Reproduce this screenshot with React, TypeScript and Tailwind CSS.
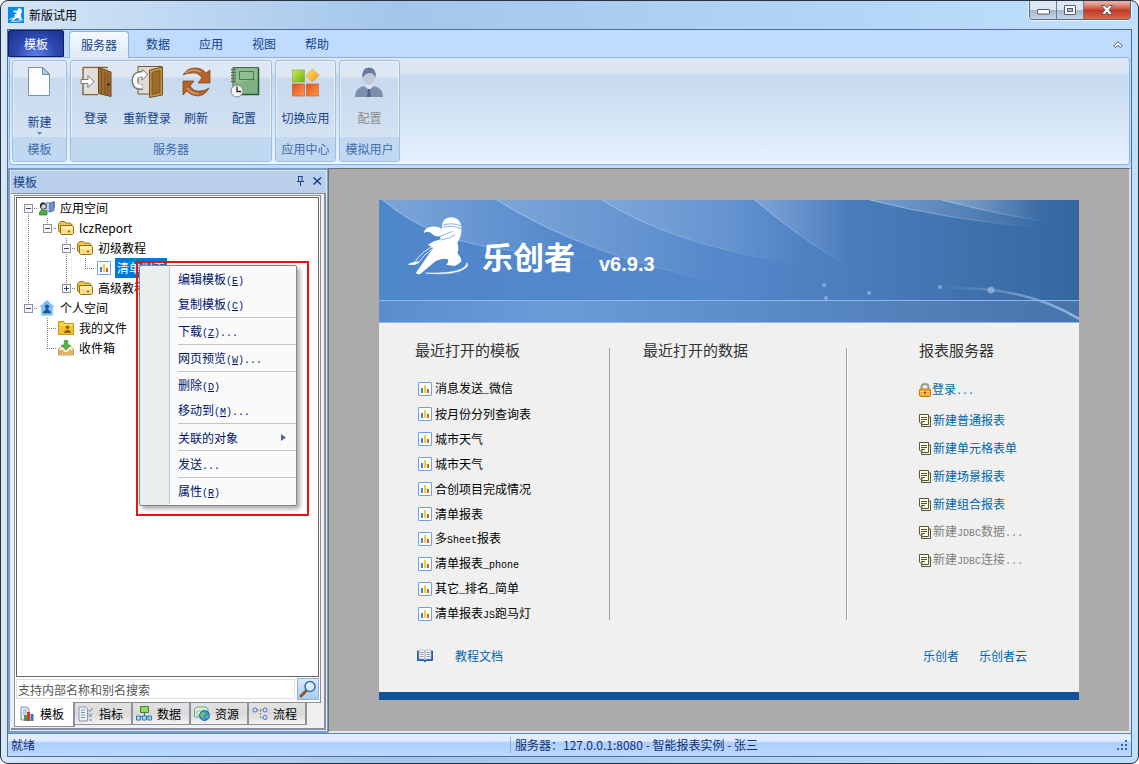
import type { ReactNode } from "react";

const ribbonTabs = ["数据", "应用", "视图", "帮助"];

const treeRows = [
  { label: "应用空间", cells: ["minus-down"], icon: "space" },
  { label: "lczReport", cells: ["line", "minus-up"], icon: "folder" },
  { label: "初级教程", cells: ["line", "blank", "minus-both"], icon: "folder" },
  { label: "清单报表", cells: ["line", "blank", "line", "elbow"], icon: "chart", selected: true },
  { label: "高级教程", cells: ["line", "blank", "plus-up"], icon: "folder" },
  { label: "个人空间", cells: ["minus-up"], icon: "home" },
  { label: "我的文件", cells: ["blank", "tee"], icon: "files" },
  { label: "收件箱", cells: ["blank", "elbow"], icon: "inbox" },
];

const menuGroups = [
  ["编辑模板(E)", "复制模板(C)"],
  ["下载(Z)..."],
  ["网页预览(W)..."],
  ["删除(D)", "移动到(M)..."],
  ["关联的对象"],
  ["发送..."],
  ["属性(R)"],
];

const recentTemplates = [
  "消息发送_微信",
  "按月份分列查询表",
  "城市天气",
  "城市天气",
  "合创项目完成情况",
  "清单报表",
  "多Sheet报表",
  "清单报表_phone",
  "其它_排名_简单",
  "清单报表JS跑马灯",
];

const serverLinks = [
  { label: "新建普通报表" },
  { label: "新建单元格表单" },
  { label: "新建场景报表" },
  { label: "新建组合报表" },
  { label: "新建JDBC数据...", disabled: true },
  { label: "新建JDBC连接...", disabled: true },
];

// Half-width latin runs sit on a 6px grid beside the 12px ideographs.
function Mixed({ text }: { text: string }) {
  return (
    <>
      {text.split(/([\x21-\x7e]+)/).map((part, i) =>
        i % 2 === 0 ? (
          part
        ) : (
          <span key={i} className="font-['Liberation_Mono',monospace] text-[10px]">
            {part.split("").map((c, j) =>
              part[0] === "(" && j === 1 ? (
                <u key={j}>{c}</u>
              ) : (
                c
              )
            )}
          </span>
        )
      )}
    </>
  );
}

function ChartIcon() {
  return (
    <svg width="14" height="14" viewBox="0 0 14 14" className="shrink-0" aria-hidden="true">
      <rect x="0.5" y="0.5" width="13" height="13" rx="0.5" fill="#fff" stroke="#6c9ff0" />
      <path d="M3 6h2v5H3z" fill="#4a80bd" />
      <path d="M6 3h2v8H6z" fill="#f5cf2b" />
      <path d="M9 7h2v4H9z" fill="#e8552d" />
    </svg>
  );
}

function FolderIcon() {
  return (
    <svg width="16" height="16" viewBox="0 0 16 16" className="shrink-0" aria-hidden="true">
      <path d="M0.5 4L2.5 1.5H6.5L8 3H12.5L14 5V12H1.5L0.5 11Z" fill="#edc44c" stroke="#9c7620" />
      <path d="M2.5 5.5H14.5L15.5 7V13.500L14.500 14.500H3.500L2.500 13.500Z" fill="#f8de82" stroke="#94701f" />
      <path d="M3.500 6.500H14.500V9H3.500Z" fill="#fdf1b4" />
      <circle cx="11" cy="11.500" r="0.900" fill="#5c430f" />
    </svg>
  );
}

function SpaceIcon() {
  return (
    <svg width="16" height="16" viewBox="0 0 16 16" className="shrink-0" aria-hidden="true">
      <path d="M8 2L11 3V12L7 11V4Z" fill="#b7cdea" stroke="#6d84ac" strokeWidth="0.8" />
      <path d="M11 3L15 1.5V10.5L11 12Z" fill="#6d97d8" stroke="#47639d" strokeWidth="0.8" />
      <path d="M15.5 2v3" stroke="#e33a8c" />
      <path d="M15.5 5v3" stroke="#4bb34b" />
      <path d="M0.5 15V12.5Q1 10 4 10Q7.5 10 8 12.5V15Z" fill="#4fae43" stroke="#27752a" strokeWidth="0.7" />
      <circle cx="4.3" cy="6.3" r="3" fill="#d8d8d8" stroke="#333" />
      <path d="M1 6Q1 2 5 2.4Q7 3 7 4.5Q4 4 3 5Q2.5 7 2 8Z" fill="#333" />
    </svg>
  );
}

function HomeIcon() {
  return (
    <svg width="16" height="16" viewBox="0 0 16 16" className="shrink-0" aria-hidden="true">
      <path d="M8 0L15.5 7H13.8V15.5H2.2V7H0.5Z" fill="#7fbdf5" stroke="#a9d4fb" strokeWidth="0.6" />
      <circle cx="8" cy="6.7" r="2.1" fill="#1c5692" />
      <path d="M3.8 13.2Q4 10.8 6.7 10L6.9 8.5H9.1L9.3 10Q12 10.8 12.2 13.2Z" fill="#1c5692" />
    </svg>
  );
}

function FilesIcon() {
  return (
    <svg width="16" height="16" viewBox="0 0 16 16" className="shrink-0" aria-hidden="true">
      <path d="M0.5 14.5V1.5H6L7.5 3.5H15.5V14.5Z" fill="#f2c52c" stroke="#c89618" />
      <path d="M1.5 5h13" stroke="#fff0a4" />
      <circle cx="9.5" cy="7.3" r="1.8" fill="#9a5b10" />
      <path d="M6 13Q6 10.3 9.5 9.8Q13 10.3 13 13Z" fill="#9a5b10" />
    </svg>
  );
}

function InboxIcon() {
  return (
    <svg width="16" height="16" viewBox="0 0 16 16" className="shrink-0" aria-hidden="true">
      <path d="M0.5 9V15H15.5V9L13 6.5H3Z" fill="#f6ead4" stroke="#c79c5d" />
      <path d="M1 10H5L6 12H10L11 10H15V14.5H1Z" fill="#e4b168" />
      <path d="M6.2 0.5H9.8V5H12.5L8 10L3.5 5H6.2Z" fill="#4eb53c" stroke="#2c8a23" strokeWidth="0.6" />
    </svg>
  );
}

const treeIcons: Record<string, ReactNode> = {
  space: <SpaceIcon />,
  folder: <FolderIcon />,
  chart: <ChartIcon />,
  home: <HomeIcon />,
  files: <FilesIcon />,
  inbox: <InboxIcon />,
};

function TreeCell({ kind }: { kind: string }) {
  const box = kind.startsWith("minus") || kind.startsWith("plus");
  const up = kind === "line" || kind === "tee" || kind === "elbow" || /up|both/.test(kind);
  const down = kind === "line" || kind === "tee" || /down|both/.test(kind);
  return (
    <svg width="19" height="20" viewBox="0 0 19 20" className="shrink-0" aria-hidden="true">
      <g stroke="#808080" strokeDasharray="1 1" fill="none">
        {up && <path d="M9.5 0V10" />}
        {down && <path d="M9.5 10V20" />}
        {(box || kind === "tee" || kind === "elbow") && <path d="M9 10.5H19" />}
      </g>
      {box && (
        <>
          <rect x="5.5" y="6.5" width="8" height="8" fill="#f7f7f7" stroke="#919191" />
          <path d="M7 10.5H12" stroke="#26487c" />
          {kind.startsWith("plus") && <path d="M9.5 8V13" stroke="#26487c" />}
        </>
      )}
    </svg>
  );
}

function PageIcon() {
  return (
    <svg width="32" height="32" viewBox="0 0 32 32" aria-hidden="true">
      <path d="M4.5 1.5H19L25.5 8V29.5H4.5Z" fill="#fcfdff" stroke="#8190aa" />
      <path d="M18.5 1.5V8.5H25.5Z" fill="#b9cbe8" stroke="#7384a4" />
    </svg>
  );
}

function LoginIcon() {
  return (
    <svg width="32" height="32" viewBox="0 0 32 32" aria-hidden="true">
      <path d="M3 1.5H28M3 1.5V28.5H18" fill="none" stroke="#8a6433" strokeWidth="1.4" />
      <path d="M4 2.5H18V28H4Z" fill="#e2dedb" />
      <path d="M18.500 1.500L31 6V30.500L18.500 27.500Z" fill="#a06f33" stroke="#6d451b" />
      <path d="M21.500 4.500V27M25 6V28M28 7V29" stroke="#7d5122" strokeWidth="1.2" />
      <circle cx="28.500" cy="18.500" r="1.2" fill="#2d1a06" />
      <path d="M1 13.500H8V9.500L14 15.500L8 21.500V17.500H1Z" fill="#fff" stroke="#777" />
    </svg>
  );
}

function ReloginIcon() {
  return (
    <svg width="32" height="32" viewBox="0 0 32 32" aria-hidden="true">
      <path d="M7 0.500H31V28H7Z" fill="#dedad6" stroke="#7a5a2c" />
      <path d="M18.500 4L31.500 1V29L18.500 31.500Z" fill="#c39548" stroke="#71501f" />
      <path d="M21 6.500L29 4.500V26.500L21 28.500Z" fill="#9c6d2a" stroke="#7c5520" />
      <path d="M12 8H9Q3.500 9 3.500 15Q4 21 9.500 21H12" fill="none" stroke="#777" strokeWidth="6" />
      <path d="M11 3.500L17 8.500L11 14Z" fill="#fff" stroke="#777" />
      <path d="M12 8.500H9Q4 9 4 15Q4.500 20.500 9.500 20.500H11.500" fill="none" stroke="#fff" strokeWidth="4" />
    </svg>
  );
}

function RefreshIcon() {
  return (
    <svg width="32" height="32" viewBox="0 0 32 32" aria-hidden="true">
      <path d="M3 9Q7 2 15 2Q22 2 26 7L30 4V17H18L22 12Q18 6 12 7Q7 7 3 9Z" fill="#b4642a" stroke="#7d3d14" strokeWidth="0.7" />
      <path d="M29 22Q25 30 17 30Q10 29 7 25L3 29V15H14L10 20Q14 26 20 25Q25 25 29 22Z" fill="#b4642a" stroke="#7d3d14" strokeWidth="0.7" />
      <path d="M5 7Q13 2 21 6M7 22Q12 28 19 28" fill="none" stroke="#dda176" strokeWidth="1.2" />
    </svg>
  );
}

function NotebookIcon() {
  return (
    <svg width="32" height="32" viewBox="0 0 32 32" aria-hidden="true">
      <path d="M5 1.500H30.500V28.500H5Z" fill="#7fb283" stroke="#3e7146" />
      <path d="M6 2.500H29.500V12L6 18Z" fill="#9bc79c" opacity="0.6" />
      <path d="M30.500 2V28.500H6" fill="none" stroke="#285a31" strokeWidth="1.500" />
      <rect x="11.500" y="5.500" width="14" height="8" fill="none" stroke="#3c8446" />
      <path d="M3 3.500H8M3 6.500H8M3 9.500H8M3 12.500H8M3 15.500H8" stroke="#596a5b" strokeWidth="1.500" />
      <circle cx="9" cy="25" r="6" fill="#f2f2f2" stroke="#888" />
      <path d="M9 20.500V25.500H13" fill="none" stroke="#222" strokeWidth="1.300" />
    </svg>
  );
}

function SwitchIcon() {
  return (
    <svg width="32" height="32" viewBox="0 0 32 32" aria-hidden="true">
      <defs>
        <linearGradient id="green" x2="1" y2="1">
          <stop stopColor="#d2ec5a" />
          <stop offset="1" stopColor="#68ad12" />
        </linearGradient>
        <linearGradient id="orange" x2="1" y2="1">
          <stop stopColor="#d8531d" />
          <stop offset="1" stopColor="#ff9a4d" />
        </linearGradient>
        <linearGradient id="amber" x2="1" y2="1">
          <stop stopColor="#ffe06a" />
          <stop offset="1" stopColor="#f59a12" />
        </linearGradient>
      </defs>
      <rect x="2.500" y="4" width="12" height="12" fill="url(#green)" stroke="#7aad27" strokeWidth="0.600" />
      <path d="M22.500 3L29 9.500L22.500 16L16 9.500Z" fill="url(#amber)" stroke="#db8c19" strokeWidth="0.600" />
      <rect x="2.500" y="18" width="12" height="12" fill="url(#orange)" stroke="#c64d1d" strokeWidth="0.600" />
      <rect x="16.500" y="18" width="12" height="12" fill="url(#orange)" stroke="#d4571f" strokeWidth="0.600" />
    </svg>
  );
}

function UserIcon() {
  return (
    <svg width="32" height="32" viewBox="0 0 32 32" aria-hidden="true">
      <path d="M1 31Q1 22 10 20L15 24L20 20Q29 22 29 31Z" fill="#7b8eae" />
      <path d="M11 19L15 24L19 19V16H11Z" fill="#dfe5ee" />
      <path d="M14 23H16L17 31H13Z" fill="#4f6589" />
      <ellipse cx="15" cy="11.500" rx="6" ry="7.500" fill="#c0cadb" />
      <path d="M8.500 12Q7 2 15 1.500Q23 2 21.500 12Q20 7 16 7Q11 7 8.500 12Z" fill="#667b9d" />
    </svg>
  );
}

function RibbonButton({
  icon,
  label,
  width,
  disabled,
  arrow,
}: {
  icon: ReactNode;
  label: string;
  width: string;
  disabled?: boolean;
  arrow?: boolean;
}) {
  return (
    <button
      disabled={disabled}
      className={`flex flex-col items-center pt-[5px] text-xs ${width} ${
        disabled ? "text-[#8d8d8d]" : "text-[#15428b]"
      }`}
    >
      {icon}
      <span className={`whitespace-nowrap leading-4 ${arrow ? "mt-4" : "mt-3"}`}>{label}</span>
      {arrow && (
        <svg width="5" height="3" viewBox="0 0 5 3" className="mt-[2px]" aria-hidden="true">
          <path d="M0 0H5L2.500 3Z" fill="#5b87c4" />
        </svg>
      )}
    </button>
  );
}

function RibbonGroup({ title, children }: { title: string; children: ReactNode }) {
  return (
    <section className="flex h-[102px] flex-col overflow-hidden rounded-[3px] border border-[#9ebfe0] bg-linear-to-b from-[#dde8f4] from-15% via-[#c8d9ed] via-18% to-[#d9e6f4] shadow-[inset_0_0_0_1px_#e6f0fa]">
      <div className="flex flex-1 px-px">{children}</div>
      <h2 className="h-6 bg-[#c1d8f1] text-center text-xs leading-6 text-[#3e6aaa]">{title}</h2>
    </section>
  );
}

function Ribbon() {
  return (
    <div className="bg-[#bfdbff] pb-[3px]">
      <nav className="flex h-[27px] items-end gap-[5px]">
        <button className="h-[27px] w-14 rounded-t-[2px] border border-[#0c1f6e] bg-[radial-gradient(ellipse_at_bottom,#5c80e8,#2c48b0_55%,#1c2f86)] text-xs text-white">
          模板
        </button>
        <button className="z-10 -mb-px h-[27px] rounded-t-[4px] border border-b-0 border-[#8db2e3] bg-linear-to-b from-[#f4f9ff] to-[#dfe9f5] px-[11px] text-xs text-[#15428b]">
          服务器
        </button>
        {ribbonTabs.map((tab) => (
          <button key={tab} className="h-[26px] px-3 text-xs text-[#15428b]">
            {tab}
          </button>
        ))}
        <button aria-label="折叠功能区" className="mr-2 mb-2 ml-auto">
          <svg width="10" height="8" viewBox="0 0 10 8" aria-hidden="true">
            <path d="M0.800 5L5 0.700L9.200 5L7.500 6.500L5 4.300L2.500 6.500Z" fill="#fff" stroke="#5a6178" />
          </svg>
        </button>
      </nav>
      <div className="mx-px flex gap-[3px] rounded-[4px] border border-[#8db2e3] bg-linear-to-b from-[#dce7f3] from-12% via-[#c7d9ee] via-18% to-[#e6f3ff] p-[2px] shadow-[inset_0_-2px_1px_#e8fbff]">
        <RibbonGroup title="模板">
          <RibbonButton icon={<PageIcon />} label="新建" width="w-[51px]" arrow />
        </RibbonGroup>
        <RibbonGroup title="服务器">
          <RibbonButton icon={<LoginIcon />} label="登录" width="w-12" />
          <RibbonButton icon={<ReloginIcon />} label="重新登录" width="w-[54px]" />
          <RibbonButton icon={<RefreshIcon />} label="刷新" width="w-11" />
          <RibbonButton icon={<NotebookIcon />} label="配置" width="w-[52px]" />
        </RibbonGroup>
        <RibbonGroup title="应用中心">
          <RibbonButton icon={<SwitchIcon />} label="切换应用" width="w-[57px]" />
        </RibbonGroup>
        <RibbonGroup title="模拟用户">
          <RibbonButton icon={<UserIcon />} label="配置" width="w-[57px]" disabled />
        </RibbonGroup>
      </div>
    </div>
  );
}

function ContextMenu() {
  return (
    <div className="absolute top-[63px] left-[119px] z-20 border-2 border-[#ee1111] pt-[2px] pr-[10px] pb-2 pl-px">
      <div
        role="menu"
        className="w-[158px] rounded-[2px] border border-[#868686] bg-[#fafafa] bg-linear-to-r from-[#e9eeee] from-[29px] to-transparent to-[29px] py-px shadow-[3px_3px_4px_#00000055]"
      >
        {menuGroups.map((group, i) => (
          <div key={i} className="ml-[29px] border-l border-[#c5c5c5]">
            {i > 0 && <hr className="ml-2 h-[2px] border-0 border-t border-[#c5c5c5]" />}
            {group.map((item) => (
              <button
                key={item}
                role="menuitem"
                className="flex h-[25px] w-full items-center justify-between pr-[10px] pl-2 text-xs text-[#00156e]"
              >
                <span>
                  <Mixed text={item} />
                </span>
                {item === "关联的对象" && (
                  <svg width="5" height="7" viewBox="0 0 5 7" aria-hidden="true">
                    <path d="M0 0L5 3.500L0 7Z" fill="#53629c" />
                  </svg>
                )}
              </button>
            ))}
          </div>
        ))}
      </div>
    </div>
  );
}

function Tree() {
  return (
    <div className="relative flex-1 border border-[#646464] bg-white pl-[2px]">
      <ul role="tree" aria-label="模板">
        {treeRows.map((row) => (
          <li key={row.label} role="treeitem" className="flex h-5 items-center text-xs text-black">
            {row.cells.map((kind, i) => (
              <TreeCell key={i} kind={kind} />
            ))}
            <span className="flex w-[17px] shrink-0 justify-center">{treeIcons[row.icon]}</span>
            <span
              className={`ml-[3px] px-[2px] leading-5 ${
                row.selected ? "bg-[#0078d7] text-white" : ""
              }`}
            >
              {row.label}
            </span>
          </li>
        ))}
      </ul>
      <ContextMenu />
    </div>
  );
}

const bottomTabs = [
  {
    label: "模板",
    icon: (
      <>
        <path d="M2 1H8L10 3V14H2Z" fill="#e6eef6" stroke="#7a8ca5" />
        <path d="M4 4h4M4 6h4M4 8h3" stroke="#8fa6c4" />
        <path d="M5 9h3v6H5z" fill="#3aa548" />
        <path d="M8 6h3v9H8z" fill="#d8392e" />
        <path d="M11.500 8h3v7h-3z" fill="#3573c5" />
      </>
    ),
  },
  {
    label: "指标",
    icon: (
      <>
        <path d="M1 1H8L9.500 3V15H1Z" fill="#eaf1f6" stroke="#889aa9" />
        <path d="M3 4h4M3 6.500h4M3 9h4M3 11.500h4" stroke="#8196a8" />
        <path d="M10.500 4L12 5.500L14.500 2M10.500 8L14 11M14 8L10.500 11M11 14h3" fill="none" stroke="#6b8998" />
      </>
    ),
  },
  {
    label: "数据",
    icon: (
      <>
        <path d="M4.500 0.500h8v6h-8z" fill="#9ed463" stroke="#3b8735" />
        <path d="M8.500 7v3M3 10.500h11" stroke="#3d7a9c" />
        <path d="M0.500 10h4v4h-4zM6.500 10h4v4h-4zM12 10h3.500v4H12z" fill="#a4daf4" stroke="#347baf" />
      </>
    ),
  },
  {
    label: "资源",
    icon: (
      <>
        <path d="M0.500 3L3 1H12L14 3V11H0.500Z" fill="#d7f0d9" stroke="#69ab77" />
        <path d="M3 5h7v4H3z" fill="#fff" stroke="#8ebf98" />
        <circle cx="10.500" cy="9.500" r="5" fill="#3990df" stroke="#2368a9" />
        <path d="M8 6L12 7L9 10L10 13Q7 12 6 9ZM12 10L15 9L13 13Z" fill="#79c451" />
      </>
    ),
  },
  {
    label: "流程",
    icon: (
      <g fill="#dfe9ff" stroke="#456bc4">
        <path d="M5 4H12M8.500 4V12H12" fill="none" stroke="#888" strokeDasharray="2 1" />
        <circle cx="3" cy="4" r="2" />
        <circle cx="13" cy="4" r="2" />
        <circle cx="13" cy="11.500" r="2" />
      </g>
    ),
  },
];

function SidePanel() {
  return (
    <aside className="flex w-80 shrink-0 flex-col bg-[#7b9dcd] py-[2px] pr-px pl-[2px]">
      <div className="flex flex-1 flex-col border border-[#dbe8f6] bg-[#f0f0f0]">
        <div className="flex h-[22px] items-center bg-[#b9cfea] pr-1 pl-[2px] text-xs text-[#15428b]">
          <h2>模板</h2>
          <button aria-label="固定" className="mr-2 mb-[2px] ml-auto">
            <svg width="9" height="10" viewBox="0 0 9 10" aria-hidden="true">
              <path d="M2.500 0.500V5.500M2 0.500H6.500M6 0V5.500M1 5.500H8M4.500 6V10" stroke="#15428b" fill="none" />
            </svg>
          </button>
          <button aria-label="关闭面板" className="mb-[2px]">
            <svg width="9" height="8" viewBox="0 0 9 8" aria-hidden="true">
              <path d="M0.500 0.500L8 7.500M8 0.500L0.500 7.500" stroke="#15428b" strokeWidth="1.500" />
            </svg>
          </button>
        </div>
        <div className="flex flex-1 flex-col border-t border-r-2 border-b-2 border-[#8b919c] pt-px pr-[3px] pl-[3px]">
          <div className="flex flex-1 flex-col border border-[#8e8e8e] bg-white p-px">
            <Tree />
            <div className="flex h-6 items-center gap-[2px]">
              <input
                aria-label="搜索"
                placeholder="支持内部名称和别名搜索"
                className="h-5 min-w-0 flex-1 border border-[#dddfe3] px-px text-xs placeholder:text-[#555555]"
              />
              <button
                aria-label="执行搜索"
                className="flex size-[22px] items-center justify-center border border-[#8fb2dc] bg-linear-to-b from-[#dcebfb] to-[#a9cbee]"
              >
                <svg width="18" height="18" viewBox="0 0 18 18" aria-hidden="true">
                  <path d="M7 11L2 16" stroke="#8a5a2b" strokeWidth="3" strokeLinecap="round" />
                  <circle cx="11" cy="6.500" r="5" fill="#d5efff" stroke="#3b6fa5" strokeWidth="1.500" />
                  <path d="M8.500 6Q9 4 11 3.700" stroke="#fff" strokeWidth="1.500" fill="none" />
                </svg>
              </button>
            </div>
          </div>
          <div role="tablist" className="flex h-[25px] items-start">
            {bottomTabs.map((tab, i) => (
              <button
                key={tab.label}
                role="tab"
                aria-selected={i === 0}
                className={`flex items-center gap-1 border-r-2 border-b border-[#8e919c] text-xs text-black ${
                  i === 0
                    ? "-mt-px h-[25px] w-[61px] border-l bg-white pl-1"
                    : "h-[22px] w-[58px] bg-linear-to-b from-[#e3e3e3] via-[#dadada] to-[#f1f1f1] pl-[3px]"
                }`}
              >
                <svg width="16" height="16" viewBox="0 0 16 16" className="shrink-0" aria-hidden="true">
                  {tab.icon}
                </svg>
                <span className="whitespace-nowrap pl-px">{tab.label}</span>
              </button>
            ))}
          </div>
        </div>
      </div>
    </aside>
  );
}

function BannerArt() {
  return (
    <svg
      viewBox="0 0 700 123"
      preserveAspectRatio="none"
      className="absolute inset-0 h-full w-full"
      aria-hidden="true"
    >
      <defs>
        <linearGradient id="sky">
          <stop stopColor="#4f87cb" />
          <stop offset="0.500" stopColor="#5488cb" />
          <stop offset="0.720" stopColor="#477ab8" />
          <stop offset="1" stopColor="#35679f" />
        </linearGradient>
        <linearGradient id="band">
          <stop stopColor="#5a8dcc" />
          <stop offset="0.250" stopColor="#6a9cd8" />
          <stop offset="1" stopColor="#4674ab" />
        </linearGradient>
        <linearGradient id="sheen">
          <stop stopColor="#fff" stopOpacity="0.260" />
          <stop offset="0.800" stopColor="#fff" stopOpacity="0" />
        </linearGradient>
        <linearGradient id="edge">
          <stop stopColor="#b5d2f6" stopOpacity="0.700" />
          <stop offset="1" stopColor="#b5d2f6" stopOpacity="0" />
        </linearGradient>
        <linearGradient id="trail">
          <stop stopColor="#bcd6f5" stopOpacity="0" />
          <stop offset="1" stopColor="#bcd6f5" stopOpacity="0.700" />
        </linearGradient>
      </defs>
      <rect width="700" height="101" fill="url(#sky)" />
      <rect y="101" width="700" height="22" fill="url(#band)" />
      <g fill="url(#sheen)">
        <path d="M4 0Q52 42 136 51L240 58Q175 35 118 0Z" />
        <path d="M118 0Q210 58 343 82L400 61Q290 42 223 0Z" />
        <path d="M223 0Q290 42 400 61L476 70Q425 42 376 0Z" />
        <path d="M376 0Q425 42 476 70L491 0Z" />
        <path d="M491 0Q570 20 663 28L700 30V0Z" />
        <path d="M563 0Q620 15 676 23L690 0Z" />
      </g>
      <g fill="none" stroke="url(#edge)">
        <path d="M4 0Q52 42 136 51T240 60" />
        <path d="M118 0Q210 58 343 82" />
        <path d="M223 0Q290 42 400 61" />
        <path d="M376 0Q425 42 476 70" />
        <path d="M491 0Q570 20 663 28" />
        <path d="M563 0Q620 15 676 23" />
      </g>
      <path d="M561 88Q645 85 700 119" fill="none" stroke="url(#trail)" strokeWidth="2.500" />
      <g fill="#a9c8ee" opacity="0.600">
        <circle cx="445" cy="85" r="2" />
        <circle cx="447" cy="98" r="2" />
        <circle cx="490" cy="93" r="2" />
        <circle cx="561" cy="87" r="2" />
        <circle cx="612" cy="90" r="3.500" />
      </g>
      <path d="M0 100.500H700M0 122.500H700" stroke="#8fb6ea" />
    </svg>
  );
}

const runnerPath =
  "M200 90Q203 66 228 66Q254 68 258 92L258 108Q256 130 246 142Q252 160 246 174Q258 186 258 198Q248 210 238 212L212 208Q221 200 218 192Q200 186 180 198L135 236Q125 238 122 232L150 192L174 158L158 148Q175 136 196 132L192 122Q180 126 166 112Q152 106 145 114Q148 96 168 94Q184 92 200 100Z";

function RunnerLogo() {
  return (
    <svg width="63" height="59" viewBox="95 62 189 177" aria-hidden="true">
      <path d={runnerPath} fill="#fff" />
      <path d="M98 209Q106 200 132 198L120 208Z" fill="#fff" />
      <path d="M184 150Q144 160 116 204M172 160Q146 176 126 206" fill="none" stroke="#fff" strokeWidth="2.500" />
      <path d="M274 202Q286 214 252 228Q210 240 150 233Q212 234 246 226Q276 216 274 202Z" fill="#fff" stroke="#fff" strokeWidth="1.500" />
      <path d="M202 90Q230 80 258 92M204 96Q230 88 257 100M192 124L232 108M196 134Q224 130 240 118" fill="none" stroke="#5188cb" strokeWidth="2" />
    </svg>
  );
}

function SheetIcon() {
  return (
    <svg width="12" height="13" viewBox="0 0 12 13" className="shrink-0" aria-hidden="true">
      <path d="M2.500 3V12.500H11.500V3Z" fill="#f5f3d8" stroke="#55553c" />
      <path d="M0.500 0.500H9.500V10.500H3L0.500 8Z" fill="#fffde6" stroke="#55553c" />
      <path d="M2 3.500H8M2 5.500H8M2 7.500H6M3 8V10" stroke="#55553c" />
    </svg>
  );
}

function StartPage() {
  return (
    <article className="flex min-h-[500px] w-[700px] flex-col border-b-8 border-[#10539b] bg-[#f0f0f0]">
      <header className="relative h-[123px]">
        <BannerArt />
        <div className="relative flex items-start pt-4 pl-7">
          <RunnerLogo />
          <h1 className="mt-[18px] ml-3 text-[31px] leading-[44px] font-bold text-white">
            乐创者
          </h1>
          <span className="mt-[34px] ml-6 font-['Liberation_Sans',sans-serif] text-xl font-bold text-white">
            v6.9.3
          </span>
        </div>
      </header>
      <div className="flex pt-[15px]">
        <section className="w-[230px] pl-9">
          <h2 className="text-[15px] leading-6 text-[#333333]">最近打开的模板</h2>
          <ul className="mt-[14px] pl-[3px]">
            {recentTemplates.map((name, i) => (
              <li key={i}>
                <a href="#" className="flex h-[25px] items-center gap-[3px] text-xs text-black">
                  <ChartIcon />
                  <span>
                    <Mixed text={name} />
                  </span>
                </a>
              </li>
            ))}
          </ul>
        </section>
        <section className="mt-[10px] mb-2 h-[272px] w-[238px] border-x border-[#a0a0a0] pl-[33px] shadow-[1px_0_0_#ffffff]">
          <h2 className="-mt-[10px] text-[15px] leading-6 text-[#333333]">最近打开的数据</h2>
        </section>
        <section className="flex-1 pl-[72px]">
          <h2 className="text-[15px] leading-6 text-[#333333]">报表服务器</h2>
          <a href="#" className="mt-[14px] flex h-7 items-center text-xs text-[#0066aa]">
            <svg width="12" height="14" viewBox="0 0 12 14" aria-hidden="true">
              <path d="M2.500 7V4Q2.500 1 6 1Q9.500 1 9.500 4V7" fill="none" stroke="#9a9a9a" strokeWidth="2" />
              <rect x="0.500" y="6" width="11" height="7.500" rx="1" fill="#f5a623" stroke="#c97a0a" />
              <path d="M1 8.500H11M1 11H11" stroke="#ffd36a" />
              <path d="M6 8.500V11" stroke="#6d4508" strokeWidth="1.500" />
            </svg>
            <span className="pl-px">
              <Mixed text="登录..." />
            </span>
          </a>
          <ul className="mt-[2px]">
            {serverLinks.map((link) => (
              <li key={link.label}>
                <a
                  href="#"
                  aria-disabled={link.disabled}
                  className={`flex h-7 items-center gap-[2px] text-xs ${
                    link.disabled ? "text-[#808080]" : "text-[#0066aa]"
                  }`}
                >
                  <SheetIcon />
                  <span>
                    <Mixed text={link.label} />
                  </span>
                </a>
              </li>
            ))}
          </ul>
        </section>
      </div>
      <footer className="mt-auto mb-7 flex items-center pr-[52px] pl-[38px] text-xs text-[#0066aa]">
        <svg width="16" height="14" viewBox="0 0 16 14" aria-hidden="true">
          <path d="M0.500 2V11.500H6.500L8 13L9.500 11.500H15.500V2Z" fill="#2f66ae" stroke="#2a5b9f" />
          <path d="M2 1H6.500L8 2V11L6.500 10H2ZM14 1H9.500L8 2V11L9.500 10H14Z" fill="#f7f7f7" stroke="#8ca7c9" strokeWidth="0.600" />
          <path d="M3 3.500H6.500M3 5.500H6.500M3 7.500H6.500M9.500 3.500H13M9.500 5.500H13M9.500 7.500H13" stroke="#9a9a9a" />
        </svg>
        <a href="#" className="ml-[22px]">
          教程文档
        </a>
        <a href="#" className="ml-auto">
          乐创者
        </a>
        <a href="#" className="ml-5">
          乐创者云
        </a>
      </footer>
    </article>
  );
}

function TitleBar() {
  return (
    <header className="flex h-7 items-start pl-[7px]">
      <svg width="16" height="16" viewBox="0 0 16 16" className="mt-[6px]" aria-hidden="true">
        <rect width="16" height="16" fill="#078bea" />
        <g transform="translate(0.500 0.500) scale(0.079) translate(-90 -56)">
          <path d={runnerPath} fill="#fff" />
          <path d="M98 209Q106 200 150 190M274 210Q240 234 150 233" fill="none" stroke="#fff" strokeWidth="10" />
        </g>
      </svg>
      <h1 className="mt-1 ml-[5px] text-xs leading-5 text-black">新版试用</h1>
      <div className="mr-[7px] ml-auto flex h-[19px] overflow-hidden rounded-b-[4px] border border-t-0 border-[#5b6a80] shadow-[0_0_0_1px_#ffffffaa]">
        <button
          aria-label="最小化"
          className="flex w-[27px] items-center justify-center border-r border-[#6d7b90] bg-linear-to-b from-[#dce6f2] from-50% via-[#a6b8cf] via-52% to-[#c6d6e8]"
        >
          <svg width="13" height="6" viewBox="0 0 13 6" className="mt-1" aria-hidden="true">
            <rect x="0.500" y="0.500" width="12" height="4.500" rx="0.500" fill="#fff" stroke="#545b6b" />
          </svg>
        </button>
        <button
          aria-label="最大化"
          className="flex w-[27px] items-center justify-center border-r border-[#6d7b90] bg-linear-to-b from-[#dce6f2] from-50% via-[#a6b8cf] via-52% to-[#c6d6e8]"
        >
          <svg width="12" height="10" viewBox="0 0 12 10" aria-hidden="true">
            <rect x="0.500" y="0.500" width="11" height="9" rx="0.500" fill="#fff" stroke="#545b6b" />
            <rect x="3.500" y="3.500" width="5" height="3" fill="#a9bfd9" stroke="#545b6b" />
          </svg>
        </button>
        <button
          aria-label="关闭"
          className="flex w-[46px] items-center justify-center bg-linear-to-b from-[#e9a99d] from-10% via-[#c23a22] via-52% to-[#d9694d]"
        >
          <svg width="12" height="10" viewBox="0 0 12 10" aria-hidden="true">
            <path
              d="M0.500 0.500H3.800L6 2.800L8.200 0.500H11.500L8 5L11.500 9.500H8.200L6 7.200L3.800 9.500H0.500L4 5Z"
              fill="#fff"
              stroke="#565a68"
            />
          </svg>
        </button>
      </div>
    </header>
  );
}

export default function App() {
  return (
    <div className="flex h-screen min-h-[740px] flex-col overflow-hidden rounded-lg border border-[#26323f] bg-[#bbdcfb] bg-linear-to-r from-[#d5e6f8] via-[#a3c6ea] via-35% to-[#bfe0fd] font-['Noto_Sans_CJK_SC',sans-serif]">
      <TitleBar />
      <div className="mx-[6px] mb-[6px] flex flex-1 flex-col border border-[#4f6f8c]">
        <Ribbon />
        <div className="flex flex-1">
          <SidePanel />
          <main className="flex flex-1 items-center justify-center border-t border-r-2 border-b-2 border-l border-t-[#707070] border-r-[#e0e0e0] border-b-[#e8e8e8] border-l-[#707070] bg-[#ababab]">
            <StartPage />
          </main>
        </div>
        <footer className="flex h-[23px] items-center border-t border-[#5a86bb] bg-linear-to-b from-[#e1edff] from-30% via-[#adcfff] via-40% to-[#bcd8ff] px-[3px] text-xs text-[#15306b]">
          <span className="w-[499px]">就绪</span>
          <span className="border-l border-[#8fb0dc] pl-1">
            服务器：127.0.0.1:8080 - 智能报表实例 - 张三
          </span>
          <svg width="11" height="11" viewBox="0 0 11 11" className="ml-auto" aria-hidden="true">
            <path
              d="M8 0h2v2H8zM8 4h2v2H8zM8 8h2v2H8zM4 4h2v2H4zM4 8h2v2H4zM0 8h2v2H0z"
              fill="#40639c"
            />
          </svg>
        </footer>
      </div>
    </div>
  );
}
